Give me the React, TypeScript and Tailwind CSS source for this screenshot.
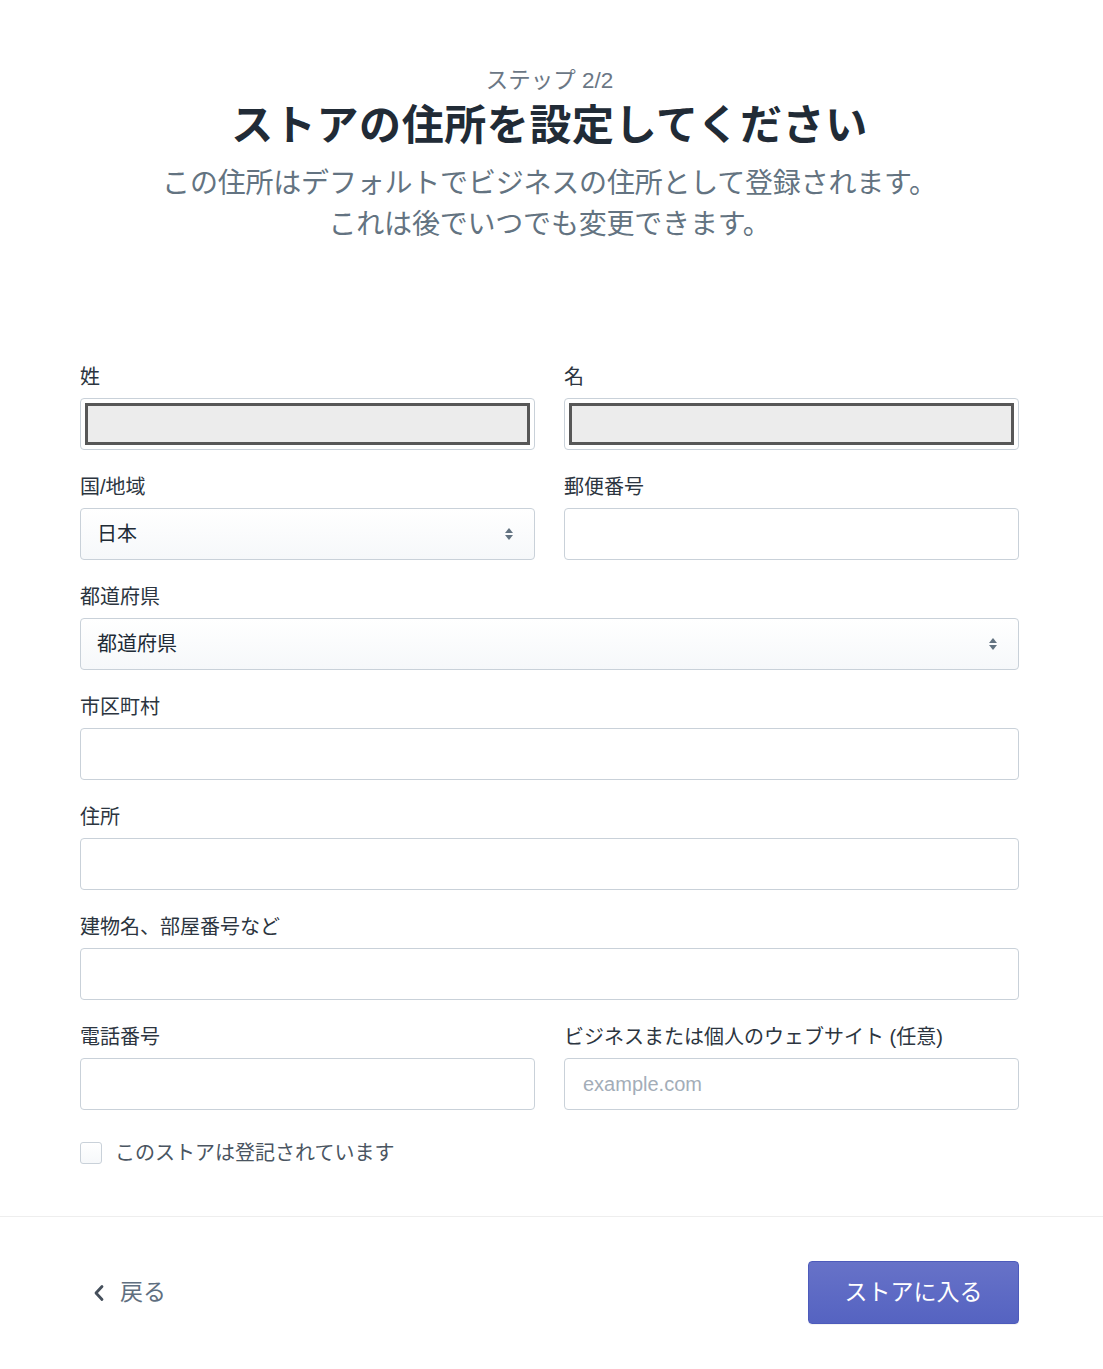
import React from 'react';

const FONT = { fontFamily: '"Liberation Sans", "Noto Sans CJK JP", sans-serif' };

const Label = ({ children }: { children: React.ReactNode }) => (
  <div className="text-[20px] leading-[24px] text-[#2c3540] mb-[9px]">{children}</div>
);

const TextInput = ({ placeholder }: { placeholder?: string }) => (
  <input
    type="text"
    placeholder={placeholder}
    className="w-full h-[52px] rounded-[4px] border border-[#c9d1d9] bg-white px-[18px] text-[20px] text-[#212b36] placeholder:text-[#a3adb8] outline-none"
    style={FONT}
  />
);

// 自動入力っぽい灰色の枠
const FilledInput = () => (
  <div className="w-full h-[52px] rounded-[4px] border border-[#c9d1d9] bg-white p-[4px] flex">
    <div className="flex-1 border-[3px] border-[#575757] bg-[#ececec]" />
  </div>
);

const SelectArrows = () => (
  <svg width="10" height="16" viewBox="0 0 10 16" className="shrink-0">
    <path d="M5 2 L9 7 H1 Z" fill="#637381" />
    <path d="M5 14 L9 9 H1 Z" fill="#637381" />
  </svg>
);

const SelectBox = ({ value }: { value: string }) => (
  <div className="w-full h-[52px] rounded-[4px] border border-[#c9d1d9] bg-gradient-to-b from-white to-[#f6f8fa] pl-[16px] pr-[20px] flex items-center justify-between">
    <span className="text-[20px] text-[#212b36]">{value}</span>
    <SelectArrows />
  </div>
);

const Field = ({ label, children, wide }: { label: string; children: React.ReactNode; wide?: boolean }) => (
  <div className={wide ? 'col-span-2' : ''}>
    <Label>{label}</Label>
    {children}
  </div>
);

const App = () => {
  return (
    <div className="min-h-screen bg-white flex flex-col" style={FONT}>
      {/* ヘッダー */}
      <div className="pl-[80px] pr-[84px] pt-[68px] flex flex-col items-center text-center">
        <div className="text-[22.5px] leading-[26px] text-[#6b7785]">ステップ 2/2</div>
        <h1 className="mt-[7px] text-[42px] leading-[50px] font-bold text-[#212b36] tracking-[0.6px]">
          ストアの住所を設定してください
        </h1>
        <p className="mt-[12px] text-[28px] leading-[41px] text-[#637381] tracking-[-0.2px]">
          この住所はデフォルトでビジネスの住所として登録されます。
          <br />
          これは後でいつでも変更できます。
        </p>
      </div>

      {/* フォーム */}
      <div className="pl-[80px] pr-[84px] mt-[120px] grid grid-cols-2 gap-x-[29px] gap-y-[25px]">
        <Field label="姓"><FilledInput /></Field>
        <Field label="名"><FilledInput /></Field>
        <Field label="国/地域"><SelectBox value="日本" /></Field>
        <Field label="郵便番号"><TextInput /></Field>
        <Field label="都道府県" wide><SelectBox value="都道府県" /></Field>
        <Field label="市区町村" wide><TextInput /></Field>
        <Field label="住所" wide><TextInput /></Field>
        <Field label="建物名、部屋番号など" wide><TextInput /></Field>
        <Field label="電話番号"><TextInput /></Field>
        <Field label="ビジネスまたは個人のウェブサイト (任意)"><TextInput placeholder="example.com" /></Field>
      </div>

      <label className="pl-[80px] mt-[31px] flex items-center gap-[13px] cursor-pointer">
        <span className="w-[22px] h-[22px] rounded-[3px] border border-[#c9d1d9] bg-gradient-to-b from-white to-[#f6f8fa]" />
        <span className="text-[20px] leading-[24px] text-[#4a5561]">このストアは登記されています</span>
      </label>

      {/* フッター */}
      <div className="mt-[51px] border-t border-[#eeeeee] pl-[80px] pr-[84px] pt-[44px] pb-[45px] flex items-center justify-between">
        <button className="flex items-center gap-[15px] pl-[13px] text-[23px] text-[#5f6f80]" style={FONT}>
          <svg width="12" height="18" viewBox="0 0 12 18">
            <path d="M9 2.5 L3 9 L9 15.5" fill="none" stroke="#454f5b" strokeWidth="2.8" strokeLinecap="round" strokeLinejoin="round" />
          </svg>
          戻る
        </button>
        <button
          className="w-[211px] h-[63px] rounded-[4px] border border-[#4d5bbb] bg-gradient-to-b from-[#6772c8] to-[#5563c1] text-white text-[23px] shadow-[0_1px_0_rgba(22,29,37,0.05)]"
          style={FONT}
        >
          ストアに入る
        </button>
      </div>
    </div>
  );
};

export default App;
